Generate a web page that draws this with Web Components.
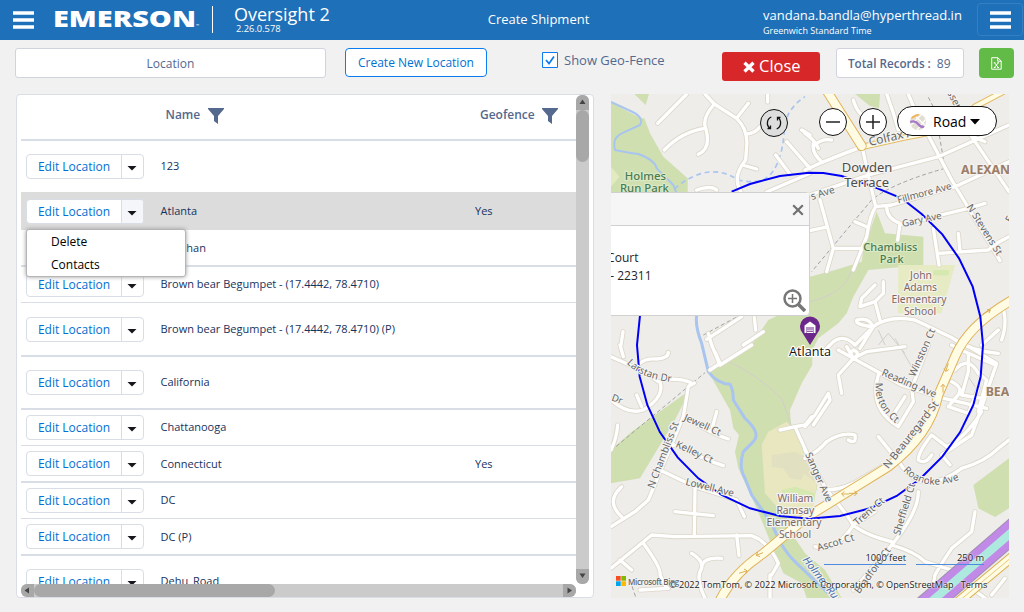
<!DOCTYPE html>
<html lang="en">
<head>
<meta charset="utf-8">
<title>Oversight 2 - Create Shipment</title>
<style>
html,body{margin:0;height:100%;overflow:hidden;background:#f1f1f1;font-family:"Open Sans","Noto Sans",sans-serif;}
</style>
</head>
<body>
<shipment-app></shipment-app>
<script>
const define=(name,html,after)=>customElements.define(name,class extends HTMLElement{
  connectedCallback(){
    if(this.shadowRoot)return;
    const r=this.attachShadow({mode:'open'});
    r.innerHTML=typeof html==='function'?html(this):html;
    if(after)after(this,r);
  }
});

define('menu-bars',`<style>:host{display:block;width:21px;height:18px}svg{display:block}</style>
<svg width="21" height="18"><path d="M0 2h21M0 9h21M0 16h21" stroke="#fff" stroke-width="3.6"/></svg>`);

define('app-header',`<style>
:host{display:flex;height:40px;background:#1e70b8;color:#fff;box-sizing:border-box}
.left{display:flex;width:475px}
.left menu-bars{margin:11px 0 0 13px}
.logo{margin:6px 0 0 20px;display:block;overflow:visible}
.rule{width:1px;height:27px;background:#fff;margin:6px 0 0 9px}
.prod{margin:4px 0 0 21px}
.t{font-size:18px;line-height:21px;white-space:nowrap}
.v{font-size:9.300px;line-height:12px;margin:-2px 0 0 2px;font-weight:500;}
.mid{width:127px;text-align:center;font-size:13px;line-height:39px;font-weight:500}
.user{margin:7px 0 0 161px;width:215px;font-size:13px;line-height:16px;font-weight:500;white-space:nowrap}
.user small{display:block;font-size:9px;line-height:13px;margin-top:1px;font-weight:500}
.box{width:46px;height:33px;box-sizing:border-box;border:1px solid #3580c3;border-radius:4px;margin:3px 0 0 -1px;padding:7px 0 0 12px}
</style>
<div class="left"><menu-bars></menu-bars>
<svg class="logo" width="149" height="26"><text x="-1" y="20.5" font-size="23.5" font-weight="800" fill="#fff" textLength="143" lengthAdjust="spacingAndGlyphs">EMERSON</text><text x="142" y="21" font-size="4" fill="#fff">™</text></svg>
<div class="rule"></div><div class="prod"><div class="t">Oversight 2</div><div class="v">2.26.0.578</div></div></div>
<div class="mid">Create Shipment</div>
<div class="user">vandana.bandla@hyperthread.in<small>Greenwich Standard Time</small></div>
<div class="box"><menu-bars></menu-bars></div>`);

define('tool-bar',`<style>
:host{display:flex;height:54px;align-items:flex-start;padding:8px 0 0 15px;box-sizing:border-box;font-size:13px;color:#54698d}
div{box-sizing:border-box;white-space:nowrap}
.loc{width:311px;height:30px;border:1px solid #cfd4dd;border-radius:3px;background:#fff;text-align:center;line-height:30px;font-size:12px}
.new{width:142px;height:29px;border:1px solid #0c7cf0;border-radius:4px;background:#fff;color:#0070d2;text-align:center;line-height:28px;margin-left:19px;font-size:12px}
.chk{display:flex;margin:4px 0 0 55px;width:180px;gap:6px;line-height:17px}
.close{width:98px;height:29px;margin-top:4px;background:#d82728;color:#fff;border-radius:3px;font-size:16.500px;line-height:28px;display:flex;padding-left:21px;gap:4px}
.close svg{margin-top:9px}
.tot{width:128px;height:30px;border:1px solid #cfd4dd;border-radius:3px;background:#fff;line-height:29px;margin-left:16px;padding-left:11px;font-size:12px}
.tot b{font-weight:600;margin-right:6px;font-size:11.700px}
.x{width:35px;height:30px;background:#62bb46;border-radius:4px;margin-left:15px;padding:9px 0 0 12px}
svg{display:block;flex:none}
</style>
<div class="loc">Location</div><div class="new">Create New Location</div>
<div class="chk"><svg width="16" height="16"><path d="M.5.5h15v15H.5z" fill="#fff" stroke="#0c7cf0"/><path d="M4 8l3 3.5L12 4.5" fill="none" stroke="#0c7cf0" stroke-width="1.7"/></svg><span>Show Geo-Fence</span></div>
<div class="close"><svg width="12" height="12"><path d="M1.500 1.800l9 8.600M10.500 1.800l-9 8.600" stroke="#fff" stroke-width="3.400"/></svg>Close</div>
<div class="tot"><b>Total Records :</b>89</div>
<div class="x"><svg width="11" height="13"><path d="M.7.7h6l3.500 3.300v8.200H.7z M6.700.7v3.500h3.500M3.500 5.800l3.800 4.700M7.300 5.800L3.500 10.500M2.800 5.800h1.700M6.200 10.500h1.800M2.800 10.500h1.700M6.200 5.800h1.800" fill="none" stroke="#fff" stroke-width="1"/></svg></div>`);

define('edit-button',`<style>
:host{display:flex;width:118px;height:25px;box-sizing:border-box;border:1px solid #d8dde6;border-radius:4px;background:#fff;font-size:12px;color:#0070d2;overflow:hidden}
.l{width:94px;text-align:center;line-height:24px;border-right:1px solid #d8dde6;white-space:nowrap}
.c{flex:1;padding:11px 0 0 5px}:host([on]) .c{background:#f4f6f9}
svg{display:block}
</style><div class="l">Edit Location</div><div class="c"><svg width="10" height="6"><path d="M.5 0h9L5 4.500z" fill="#16161c"/></svg></div>`);

define('location-row',el=>`<style>
:host{display:flex;box-sizing:border-box;height:${el.getAttribute('h')}px;border-bottom:${el.getAttribute('b')}px solid #d8dde6;padding:${el.getAttribute('p')}px 0 0 5px;font-size:11px;color:#16325c;line-height:24px;white-space:nowrap;flex:none}
:host([sel]){background:#dcdcdc}
:host([low]) div{padding-top:1px}
edit-button{margin-right:16.500px}
.n{width:314.500px}
</style><edit-button ${el.hasAttribute('sel')?'on':''}></edit-button><div class="n"><slot></slot></div><div>${el.getAttribute('geo')||''}</div>`);

define('filter-head',`<style>:host{display:flex;gap:7.500px;font-size:12px;font-weight:600;color:#54698d;line-height:19px}span{letter-spacing:-.03px}svg{display:block;margin-top:3px}</style>
<slot></slot><svg width="16" height="16"><path d="M0 0h16v1L10 8v8l-4-3V8L0 1z" fill="#54698d"/></svg>`);

define('row-menu',`<style>:host{display:block;position:absolute;left:9px;top:134px;width:160px;height:48px;box-sizing:border-box;border:1px solid #b5b5b5;border-radius:3px;background:#fff;box-shadow:0 0 4px #999;padding-left:24px;font-size:12px;line-height:23px;color:#000}</style><div>Delete</div><div>Contacts</div>`);

define('scroll-track',el=>{
 const v=el.hasAttribute('v');
 return `<style>
:host{display:flex;flex-direction:${v?'column':'row'};background:#cbcbcb;border-radius:6px;overflow:hidden}
.b{flex:none;width:13px;height:13px;background:#a8a8a8}
.b.v{height:15px}
.t{flex:none;background:#a8a8a8;border-radius:7px;${v?'height:52px;width:13px':'width:241px;height:13px'}}
.s{flex:1}svg{display:block}
</style>${v?`<div class="b v"><svg width="13" height="15"><path d="M6.500 4.500L9.500 9h-6z" fill="#444"/></svg></div><div class="t"></div><div class="s"></div><div class="b v"><svg width="13" height="15"><path d="M6.500 9L9.500 4.500h-6z" fill="#444"/></svg></div>`
:`<div class="b"><svg width="13" height="13"><path d="M3.500 6.500L8 3.500v6z" fill="#444"/></svg></div><div class="t"></div><div class="s"></div><div class="b"><svg width="13" height="13"><path d="M9 6.500L4.500 3.500v6z" fill="#444"/></svg></div>`}`});

define('location-table',`<style>
:host{display:grid;position:relative;grid-template-columns:555px 13px;grid-template-rows:489px 13px;width:578px;height:504px;box-sizing:border-box;border:1px solid #d8dde6;border-radius:4px;background:#fff;padding-left:4px}
.rows{overflow:hidden;height:489px}
.head{height:46px;border-bottom:2px solid #d8dde6;display:flex;padding:10px 0 0 144.500px;box-sizing:border-box}
.head filter-head:first-child{width:314.500px}
scroll-track[v]{height:489px}
</style>
<div class="rows"><div class="head"><filter-head>Name</filter-head><filter-head>Geofence</filter-head></div>
<location-row h="51" b="0" p="13">123</location-row>
<location-row sel h="38" b="0" p="7" geo="Yes">Atlanta</location-row>
<location-row h="37" b="2" p="6">Bhushan</location-row>
<location-row h="36" b="1" p="5">Brown bear Begumpet - (17.4442, 78.4710)</location-row>
<location-row h="54" b="2" p="14">Brown bear Begumpet - (17.4442, 78.4710) (P)</location-row>
<location-row h="53" b="2" p="13">California</location-row>
<location-row h="36" b="1" p="5">Chattanooga</location-row>
<location-row low h="37" b="2" p="5" geo="Yes">Connecticut</location-row>
<location-row h="36" b="1" p="5">DC</location-row>
<location-row low h="37" b="2" p="5">DC (P)</location-row>
<location-row h="50" b="1" p="13">Dehu_Road</location-row></div>
<scroll-track v></scroll-track><scroll-track></scroll-track>
<row-menu></row-menu>`);

/* Street geometry, in thirds of a pixel; each group has its own origin. */
const streets={
'0,0':`M245 12L158 100 M300 12L328 42L395 85Q430 120 425 170L422 210Q380 260 408 306 M328 42Q290 85 302 115Q320 175 280 193 M300 115Q230 125 178 180 M395 85L430 40 M488 12V36 M425 132Q450 130 465 110 M412 225L455 237 M512 195L555 252 M545 155L615 235 M590 120L615 135 M485 306L615 250 M275 300Q320 285 335 300 M54 725L48 765 M310 730L320 765 M305 748L410 680 M448 682L452 720 M475 725L415 765`,
'600,0':`M0 240L40 222Q200 155 280 138 M0 320L190 255L400 200L612 105 M25 160Q20 190 50 215 M30 165Q50 145 80 150 M0 130Q30 150 40 175 M145 30Q160 80 190 82L220 105 M245 12Q265 65 280 120 M310 12L330 60 M170 165L200 300L212 350Q195 375 185 440L145 540 M212 350L260 345L450 290L612 215 M245 350Q245 385 285 400L278 450 M285 405L490 355L540 340 M330 60L440 270L585 512 M440 12Q460 75 500 140L612 305 M505 140L540 155 M385 415L402 525 M402 490L550 480L575 460L612 440 M460 430L465 485 M45 330L85 475L65 545 M85 475L170 475 M0 425L60 412 M150 395L185 410 M210 585L170 625L165 650L210 635L235 610V575 M210 635L225 690 M75 765Q110 725 150 765 M75 765L60 780 M150 765L205 710Q190 680 155 690Q150 705 205 710Q250 675 330 690L435 740Q500 785 580 790 M205 710L165 775 M590 645Q610 690 590 750 M530 765L580 720`,
'0,765':`M18 35L120 80L160 110 M190 104Q225 100 250 110 M55 35L45 0 M105 55Q120 40 155 42Q190 40 190 22 M95 150L110 185 M18 165Q70 210 115 195Q180 155 165 110 M250 110Q265 112 250 125L235 215L180 345L130 465L90 500L18 545 M250 125L268 114 M38 240Q35 280 18 315 M235 215Q290 250 350 275L370 282 M320 255L335 200 M195 295L320 350L355 362 M165 375L270 425L395 465L418 515 M270 430L268 570 M210 500L325 512 M18 670L140 570L210 575L440 572Q490 590 520 655L500 690 M115 595Q170 670 165 690L185 730 M45 645L80 675 M395 570L402 632 M260 625Q295 645 290 670 M290 670Q270 700 300 759 M290 670Q290 635 350 640 M50 425Q0 470 50 515 M105 735L190 730 M495 690V759 M330 20L345 55L315 75 M320 0L345 60 M345 60L440 0 M525 255L570 245 M570 245L600 240L620 215 M570 245L640 400`,
'600,765':`M0 315L65 435Q120 500 145 540 Q180 570 260 590 M100 15L145 40L290 120L395 155L545 190 M145 40L100 90L110 145 M145 40L125 5 M145 40L185 20L300 5 M145 40Q130 25 145 15Q170 25 145 40 M220 90Q190 190 280 245L325 170L320 130L370 0 M300 155L255 225 M0 340Q40 320 65 290Q110 260 150 270Q155 300 130 285 M0 245L30 210L70 145L75 165L25 240 M220 275L285 355Q350 460 470 370Q540 350 580 310L612 285 M65 435Q120 435 180 395L240 360 M340 440Q340 500 268 590L260 600Q330 620 360 650L440 675 M260 600L145 735 M30 605Q90 625 145 540L210 500 M510 500L500 560L440 610Q400 670 390 690Q385 740 345 759 M440 0L480 20L570 60 M450 75Q490 30 520 85L545 105L520 200 M490 25V80L470 150L530 160 M440 110Q480 130 455 155L430 185L490 205L520 130 M500 10L575 55L520 215L500 270L410 330L435 360 M530 200Q480 280 425 305L380 270Q340 320 340 345Q360 360 380 330 M600 645L500 730L540 759 M600 700L560 750`
};
const flat=Object.entries(streets).map(([o,d])=>`<path transform="translate(${o})" d="${d}"/>`).join('');
const label=(x,y,a,s,t,c)=>`<text transform="translate(${x},${y}) rotate(${a})" font-size="${s}" ${c?`class="${c}"`:''}>${t}</text>`;
const major='M665 2L770 168 M1300 590Q1100 680 1050 800L1000 915Q975 1035 850 1130L600 1285L475 1390Q385 1450 345 1530';
const minor='M765 172L900 142Q1050 120 1110 50L1195 5';

define('street-map',`<style>
:host{display:block;position:relative;width:398px;height:504px;overflow:hidden;background:#eeedea}
svg{display:block}
.map text{font-family:"Noto Sans","Open Sans",sans-serif;fill:#666;paint-order:stroke;stroke:#f5f3ef;stroke-width:7px;stroke-linejoin:round}
.map text.c{text-anchor:middle}.map .park{fill:#4a7c53;text-anchor:middle;font-weight:500;stroke:#dce9c5}.map .school{fill:#7d6864;text-anchor:middle}.map .city{fill:#9b7d66;font-weight:700}.map .area{fill:#4d4d4d;text-anchor:middle}.map .river{fill:#3e6fae;font-style:italic}
.round{position:absolute;top:14px;width:28px;height:28px;box-sizing:border-box;border:1px solid #111;border-radius:50%;background:#fff}
.round svg{margin:3px}
.road{position:absolute;left:286px;top:12px;width:100px;height:30px;box-sizing:border-box;border:1.300px solid #111;border-radius:15px;background:#fff;display:flex;align-items:center;font:14px "Open Sans",sans-serif;padding:1px 0 0 12px;gap:7px;color:#000}
.road svg:last-child{margin-left:-3px}
.pop{position:absolute;left:-10px;top:98px;width:209px;height:124px;box-sizing:border-box;border:1px solid #d0d0d0;border-radius:4px;background:#fff;font-size:12px;line-height:18px;color:#212529}
.pop .h{height:33px;background:#f6f6f6;border-bottom:1px solid #d0d0d0;display:flex;justify-content:flex-end;padding:11px 5px 0 0;box-sizing:border-box}
.pop .b{padding:23px 0 0 2px;white-space:pre}
.glass{position:absolute;right:3px;bottom:3px}
.pin{position:absolute;left:188px;top:222px}
.foot{position:absolute;font:10px/13px "Open Sans",sans-serif;color:#222;white-space:nowrap;text-shadow:0 0 2px #fff,0 0 2px #fff}
.scale{border-bottom:1px solid #4b8be0;text-align:right;height:15px;box-sizing:border-box;line-height:15px;font-size:9.300px}
</style>
<svg class="map" width="398" height="504" viewBox="18 12 1194 1512">
<g fill="#cfdfb0"><path d="M18 36L60 60L108 85L118 85L135 130L175 200L248 265V320H18z M88 12H132L122 45z M750 12H825L822 55L795 48z"/>
<path d="M815 365L840 430L955 440V525L790 540L745 620L725 670L700 700L640 745L622 780V825L590 880L555 960L560 1030L640 1150L635 1200L600 1290L560 1330L600 1390L660 1440L710 1524H605L590 1480L535 1450L500 1365L455 1255L400 1135L390 1085L402 1035L385 1015L375 960L310 845L435 770L490 690L520 676L615 560L690 540L770 515L775 480z"/>
<path d="M18 1080L80 1025L255 900L210 990L105 1165L18 1180z M1212 1105L1105 1185L1120 1255L1170 1281L1212 1255z"/></g>
<path d="M280 0H450L410 145H278z" transform="translate(600,525)" fill="#e7ebc3"/>
<path d="M985 540h46v16h-46z" fill="#d5e8af"/>
<path d="M470 1065L490 1025L545 995L575 1025L640 1150L620 1290H550L480 1210z" fill="#e8e7c0"/>
<path d="M500 1095l70-10 60 30v60l-35-25-5 20-35-5-20-30-35-5z" fill="#e1e0c1"/><path d="M530 1200l40-10 60 20v20l-95 5z" fill="#d5e8af"/>
<path d="M18 230l25 30-25 30z" fill="#e3eabf"/>
<g fill="none" stroke="#a9c5ef" stroke-width="9" stroke-linejoin="round"><path d="M18 36L70 60Q120 80 105 105L50 130Q20 145 30 180Q80 190 100 192Q150 210 155 235L205 285L215 310" stroke-width="6"/><path d="M275 676Q270 710 290 760L310 845Q335 880 375 883Q385 900 385 930L420 985Q470 1030 445 1055L415 1085Q400 1130 420 1165L440 1215L500 1300Q530 1380 575 1420L670 1510"/>
<path d="M208 297Q310 210 400 270Q440 280 475 270Q530 240 538 120Q540 60 600 20" stroke-dasharray="15 11" stroke-width="5"/></g>
<g fill="none" stroke="#a3a3a3" stroke-width="3" stroke-dasharray="12 8"><path d="M970 22L990 60 1020 235Q860 280 800 330L620 545 M295 735L415 670 M18 1082L300 848 M970 130L1020 235 M75 1470L95 1530"/></g>
<path d="M370 815Q450 850 530 925L560 1010 M615 635Q720 610 740 540 M840 765L820 720M820 765L850 730L900 790M870 745L920 830M1090 860L1110 890" fill="none" stroke="#d3cfca" stroke-width="3"/>
<g fill="none" stroke-linecap="round" stroke-linejoin="round"><g stroke="#dcd7c9" stroke-width="15">${flat}</g><g stroke="#fff" stroke-width="10">${flat}</g>
<path d="${minor}" stroke="#e2bc68" stroke-width="19"/><path d="${minor}" stroke="#fffce3" stroke-width="13"/>
<path d="${major}" stroke="#dfb35a" stroke-width="30"/><path d="${major}" stroke="#fffce3" stroke-width="24"/></g>
<g fill="none"><path d="M1240 1309L950 1560" stroke="#9d8eb0" stroke-width="72"/><path d="M1240 1309L950 1560" stroke="#c08ae6" stroke-width="66"/><path d="M1240 1309L950 1560" stroke="#aee9df" stroke-width="25"/><path d="M1240 1385L1030 1560" stroke="#dcae49" stroke-width="30"/><path d="M1240 1385L1030 1560" stroke="#fffce3" stroke-width="24"/><path d="M1240 1385L1030 1560" stroke="#dcae49" stroke-width="2"/></g>
<g fill="none" stroke="#dcae55" stroke-width="3"><path d="M732 1212h-22l8-8m-8 8l8 8 M732 1210h24l-8-8m8 8l-8 8 M474 1388l-20 8 4-10m-4 10l11 4 M402 1450l24-8-9-5m9 5l-5 10 M1030 820l-8 24-5-9m5 9l9-5 M1014 908v-25l-7 8m7-8l7 8 M1134 672l22-12-10-1m10 1l-4 9"/></g>
<path d="M380 305L435 282L525 258L612 248L655 249L710 258L805 290L890 325L950 372L1012 433L1062 505L1103 590L1126 680L1134 765L1127 860L1105 945L1065 1027L1012 1100L945 1167L875 1218L795 1255L705 1278L612 1286L525 1278L435 1255L350 1215L280 1165L218 1102L165 1027L127 945L104 860L96 765L105 676" fill="none" stroke="#0000f5" stroke-width="6"/>
${label(121,269,0,34,'Holmes','park')}${label(118,305,0,34,'Run Park','park')}
${label(856,482,0,33,'Chambliss','park')}${label(860,518,0,33,'Park','park')}
${label(786,245,0,39,'Dowden','area')}${label(785,291,0,39,'Terrace','area')}
${label(1068,251,0,37,'ALEXAN','city')}${label(1142,917,0,37,'BEA','city')}
${label(948,567,0,31,'John','school')}${label(946,603,0,31,'Adams','school')}${label(942,639,0,31,'Elementary','school')}${label(945,675,0,31,'School','school')}
${label(571,1237,0,31,'William','school')}${label(571,1273,0,31,'Ramsay','school')}${label(567,1309,0,31,'Elementary','school')}${label(570,1345,0,31,'School','school')}
${label(794,168,-13,36,'Colfax Ave')}${label(621,330,-18,30,'s Ave')}${label(880,340,-15,29,'Fillmore Ave')}${label(893,411,-12,29,'Gary Ave')}${label(1084,350,58,30,'N Stevens St')}${label(1026,8,62,30,'ssen')}${label(1218,400,-62,30,'E')}
${label(18,931,20,29,'Dr')}${label(235,990,24,30,'Jewell Ct')}${label(210,1070,25,30,'Kelley Ct')}${label(240,1184,14,30,'Lowell Ave')}${label(146,1197,-69,30,'N Chambliss St')}
${label(929,862,-66,30,'Winston Ct')}${label(828,855,23,30,'Reading Ave')}${label(850,1138,-52,32,'N Beauregard St')}${label(600,1093,66,30,'Sanger Ave')}${label(757,1308,-41,30,'Trent Ct')}${label(640,1384,-17,30,'Ascot Ct')}${label(884,1337,-73,30,'Sheffield Ct')}${label(763,1513,-54,30,'Bradford Ct')}${label(592,1410,52,32,'Holmes Run','river')}
<defs><path id="larstan" d="M65 820Q105 865 205 877"/><path id="merton" d="M812 878Q805 960 900 1020"/><path id="roanoke" d="M894 1142Q960 1210 1065 1168"/></defs>
<text font-size="30"><textPath href="#larstan">Larstan Dr</textPath></text><text font-size="30"><textPath href="#merton">Merton Ct</textPath></text><text font-size="30"><textPath href="#roanoke">Roanoke Ave</textPath></text>
<text x="615" y="799" font-size="38" text-anchor="middle" style="fill:#111;stroke:#fff;font-family:'Open Sans'">Atlanta</text>
</svg>
<svg class="pin" width="22" height="30"><path d="M11 29L3.500 17A10 10 0 1 1 18.500 17z" fill="#6b2789"/><path d="M5.500 9.500L11 5.500l5.500 4V17h-2v-6h-7v6h-2z" fill="#fff"/><path d="M8 12h6M8 14.200h6M8 16.400h6" stroke="#fff" stroke-width="1.200"/></svg>
<div class="pop"><div class="h"><svg width="12" height="12"><path d="M1.200 1.200l9.600 9.600M10.800 1.200l-9.600 9.600" stroke="#717171" stroke-width="2.200"/></svg></div><div class="b"> Court
  - 22311</div><svg class="glass" width="23" height="23"><circle cx="9.500" cy="9.500" r="8" fill="none" stroke="#777" stroke-width="2.500"/><path d="M15 15l7 7" stroke="#777" stroke-width="3.500"/><path d="M9.500 5v9M5 9.500h9" stroke="#777" stroke-width="1.500"/></svg></div>
<div class="round" style="left:149px;top:15px;background:#dedede"><svg width="20" height="20" fill="none" stroke="#111" stroke-width="1.300"><path d="M6.300 15.500A6.600 6.600 0 0 1 7.300 4M13.700 4.500A6.600 6.600 0 0 1 12.700 16M3.500 15.500h3V12.500M16.500 4.500h-3V7.500"/></svg></div>
<div class="round" style="left:208px"><svg width="20" height="20"><path d="M3 10h14" stroke="#222" stroke-width="1.500"/></svg></div>
<div class="round" style="left:248px"><svg width="20" height="20"><path d="M3 10h14M10 3v14" stroke="#222" stroke-width="1.500"/></svg></div>
<div class="road"><svg width="16" height="16"><clipPath id="k"><circle cx="8" cy="8" r="8"/></clipPath><g clip-path="url(#k)" fill="none"><path d="M0 0h16v16H0z" fill="#e3ded3"/><path d="M3 0L16 12M0 12L12 0M7 16L16 5" stroke="#fff" stroke-width="1.200"/><path d="M1 4L9 0" stroke="#efb75a" stroke-width="2"/><path d="M0 8Q5 6 8 10T16 13" stroke="#a678c8" stroke-width="2.200"/></g></svg>Road<svg width="10" height="6"><path d="M0 0h10L5 5.500z" fill="#000"/></svg></div>
<div class="foot" style="left:5px;top:481px;display:flex;gap:2px;font-size:8px;letter-spacing:-.35px;font-weight:600;color:#666"><svg width="10" height="10" style="margin-top:1px"><path d="M0 0h4.700v4.700H0z" fill="#f25022"/><path d="M5.300 0H10v4.700H5.300z" fill="#7fba00"/><path d="M0 5.300h4.700V10H0z" fill="#00a4ef"/><path d="M5.300 5.300H10V10H5.300z" fill="#ffb900"/></svg>Microsoft Bing</div>
<div class="foot scale" style="left:213px;top:456px;width:82px">1000 feet</div><div class="foot scale" style="left:305px;top:456px;width:68px">250 m</div>
<div class="foot" style="left:58px;top:484px;font-size:9.100px;display:flex;gap:7px"><span>© 2022 TomTom, © 2022 Microsoft Corporation, © OpenStreetMap</span><span>Terms</span></div>`);

define('shipment-app',`<style>:host{display:block;width:1024px;height:612px;background:#f1f1f1;overflow:hidden}main{display:flex;padding-left:16px;gap:17px}</style>
<app-header></app-header><tool-bar></tool-bar><main><location-table></location-table><street-map></street-map></main>`);
</script>
</body>
</html>
